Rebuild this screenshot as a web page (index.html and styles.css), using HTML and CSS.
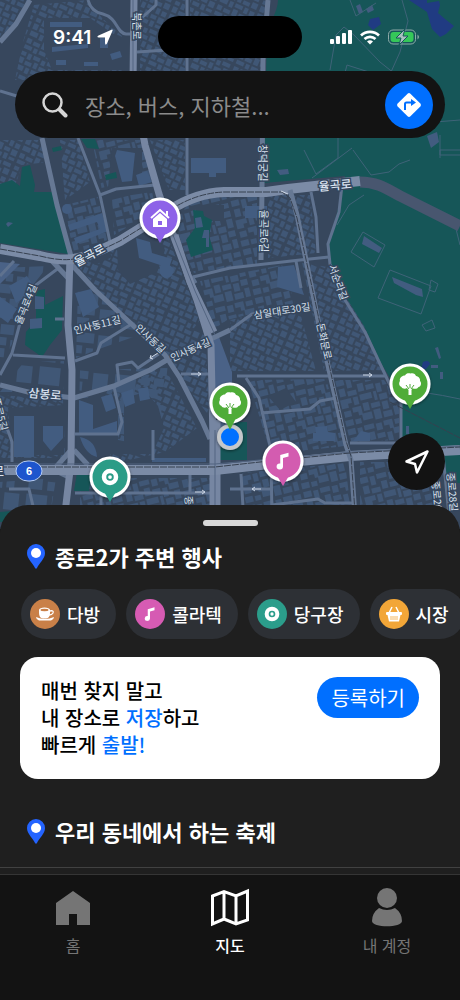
FILE: index.html
```html
<!DOCTYPE html>
<html lang="ko">
<head>
    <meta charset="UTF-8">
    <meta name="viewport" content="width=device-width, initial-scale=1.0">
    <title>지도</title>
    <link rel="stylesheet" href="styles.css">
</head>
<body>
    <!-- icons used in more than one place -->
    <svg class="defs" aria-hidden="true">
        <symbol id="note" viewBox="0 0 24 24">
            <path d="M9 5.500 18 3v4l-6 1.800V18a3.500 3.200 0 1 1-3-3.200z" fill="#fff"/>
        </symbol>
        <symbol id="ball" viewBox="0 0 24 24">
            <circle cx="12" cy="12" r="8" fill="none" stroke="#fff" stroke-width="6"/>
            <circle cx="12" cy="12" r="2.500" fill="#fff"/>
        </symbol>
        <symbol id="tree" viewBox="0 0 24 24">
            <path d="M7 3.500C8 1 11 1 12.500 1.500 15 .5 17.500 2 18 4c3 .5 4.500 3 4 5 2 2 1 5.500-1.500 6-1 2-4.500 2.500-6 1L13.500 18v5h-3v-5L9 16c-2 1.500-5 .5-5.500-1C1 14 .5 11 2 9 1 6 4 3.500 7 3.500z" fill="#fff"/>
            <path d="m8 13 3 4m1-5v4m4-3-3 4" fill="none" stroke="#4faa3a"/>
        </symbol>
        <symbol id="place" viewBox="0 0 18 25">
            <path d="M9 0a9 9 0 0 0-9 9c0 6 6 10 8 15q1 1.500 2 0c2-5 8-9 8-15a9 9 0 0 0-9-9z" fill="#2464ff"/>
            <circle cx="9" cy="9" r="5" fill="#fff"/>
        </symbol>
    </svg>

    <main class="app">
        <section class="map-area">
            <svg class="map" viewBox="0 0 460 529" preserveAspectRatio="xMidYMin slice" role="img" aria-label="종로 지도">
                <defs>
                    <pattern id="homes" width="58" height="50" patternUnits="userSpaceOnUse" patternTransform="rotate(-14)">
                        <path d="M1 1h8v6H1zM11 2h5v9h-5zM18 1h10v5H18zM30 2h6v7h-6zM38 1h9v9h-4V6h-5zM49 2h7v5h-7zM2 10h6v8H2zM10 14h9v5h-9zM21 9h6v8h-6zM29 12h8v5h-8zM39 13h5v9h-5zM46 10h10v6H46zM1 21h11v5H8v4H1zM14 21h5v8h-5zM21 20h12v6H21zM35 20h3v9h-3zM40 24h8v6h-8zM50 18h6v9h-6zM2 33h7v6H2zM11 31h9v9h-4v-4h-5zM22 29h6v8h-6zM30 31h9v5h-9zM41 32h6v8h-6zM49 30h7v6h-7zM1 42h8v6H1zM11 43h6v5h-6zM19 39h10v7H19zM31 38h7v10h-7zM40 42h9v6h-9zM51 39h5v9h-5z"/>
                    </pattern>
                    <pattern id="houses" width="40" height="36" patternUnits="userSpaceOnUse" patternTransform="rotate(24)">
                        <path d="M1 1h5v4H1zM8 1h4v6H8zM14 1h7v4h-7zM23 2h4v5h-4zM29 1h8v4h-8zM1 7h5v6H1zM8 9h7v4H8zM17 7h4v6h-4zM23 9h7v4h-7zM32 7h6v6h-6zM1 15h8v5H1zM11 15h4v6h-4zM17 15h8v4h-8zM27 15h4v6h-4zM33 16h5v5h-5zM1 23h5v5H1zM8 24h7v4H8zM17 21h5v7h-5zM24 23h6v4h-6zM32 23h6v6h-6zM1 30h8v4H1zM11 30h4v5h-4zM17 30h7v4h-7zM26 29h4v6h-4zM32 31h6v3h-6z"/>
                    </pattern>
                    <pattern id="offices" width="76" height="64" patternUnits="userSpaceOnUse" patternTransform="rotate(6)">
                        <path d="M2 2h16v12H2zM22 3h9v18h-9zM35 2h18v10H35zM57 3h14v20H57zM3 18h14v17H3zM22 26h19v9H22zM35 15h7v8h-7zM46 17h7v20h-7zM57 27h8v9h-8zM2 40h21v18H2zM28 40h9v8h-9zM28 51h18v9H28zM41 40h10v8H41zM56 41h15v17H56z"/>
                    </pattern>
                    <filter id="shadow" x="-30%" y="-30%" width="160%" height="160%">
                        <feDropShadow dx="0" dy="1" stdDeviation="1.500" flood-opacity=".5"/>
                    </filter>
                </defs>

                <rect class="land" width="460" height="530"/>

                <!-- building blocks -->
                <path fill="url(#houses)" d="M0 0h30L14 26 0 40zM34 5l54-5 14 18 20 18v44H15l8-38zM140 0h45v80h-45zM190 0h80l-8 70h-72z"/>
                <path fill="url(#houses)" d="M0 140h40l8 22-26 3-6 18-16 4zM60 140h18l12 42-25 18zM150 140h35v50h-16zM268 195h42l6 58-48 5zM230 320l68-15 18 66h-86zM302 262l30 6 60 102-68 1z"/>
                <path fill="url(#homes)" d="M92 140h48l14 42-52 8zM65 205l33-8 9 43-34 15zM112 198l40-6 4 18-42 25zM192 197h65v67l-63 9-21-46zM200 281l82-16 13 38-68 17-14 10zM248 380l78-1 20 67-75 8zM334 380h50l15 22v38l-50 2zM242 473l103-10 7 55H242zM360 462h80v60h-80zM80 478h130v42H80z"/>
                <path fill="url(#houses)" d="M78 266l40-24 42-25 14 36 26 67-15 20-40-4-43-42zM150 340l25-12 30 4 5 85zM105 390l60-22 32 60-32 24-54 12zM0 395l63 5 2 58H0z"/>
                <path fill="url(#offices)" d="M0 268l48-2-30 38-6 40-12 21zM78 288l22 8 42 38-43 15-23 9zM24 362l40-1v31H0zM80 370l90-2-16 80-76 3zM0 482l56-4-8 52H0z"/>

                <!-- yards and squares without houses -->
                <path class="land" d="M44 18h46l32 22v30H52l-8-20zM117 244l34-19 14 25-8 22-27 12-12-14zM83 252l22-9 7 14-17 8zM124 398l22-6 12 14 6 22-12 26h-28zM78 398h40v42l30 6v8H76zM8 408l56-3v50H12zM196 205h28v16h-28zM268 396l18-8 10 14-16 8zM112 148h30v40h-34z"/>

                <path class="building" d="m117 150 18 3-3 28-10 1-7-26zM136 175l11-4 5 11-13 4zM191 158h35v15h-10v4h-7v-4h-18zM68 225l34-12 6 18-32 13-2-6 26-9-3-7-27 9zM136 238l14 4 2 11 20 6-3 9-30-10zM160 266q8-4 14 3-1 10-9 9-7-3-5-12M278 267l16-2 10 30-27-8zM245 206h22v12h-22zM14 416h20v41H14zM43 426h20v12l-12 13-8-10zM79 400l14 5v24l24-8v12H79zM101 397l11-3 4 14-10 4zM121 393l12-4 2 14-10 4zM138 389l10-2 2 12-10 2zM80 437q16 3 17 20-12-3-17-20M315 427l12-1 1 6 7 1v8h-22v-8h3zM361 431l9 2v8h-17zM50 22h32v5H50zM52 47l36-3v4l-36 4zM100 38h8v10h-8zM110 54l10-3 2 6-10 3zM56 60h10v5H56zM84 62h14v4H84zM9 286l18-10 9 14-20 13zM0 297l17 12-9 14-8-6zM75 293l16-4 8 18-16 10zM152 458h54v4h-54z"/>
                <circle class="building" cx="67" cy="209" r="5"/>

                <!-- parks -->
                <path class="park" d="M278 0c0 12-10 24-11 38l-4 145 82-7-2 12-6 25-9 31 2 20 14 30 20 32 17 37 21 35v60h43v25h15V0z"/>
                <path class="park" d="m22 167 8-2 5 20-1 7h20l5 17 9 31v14L0 243v-59l12-4 8 6zM193 210l10 1 1 5 8 4-3 16 4 14-22 7-5-17 9-12zM36 291l9-2v16l18-9-1 34-12 15-8 12-17-12 1-13 10-12zM105 175l11-3 1 6-11 2zM52 148l9-2 1 4-9 2zM81 139h14l4 10-12-1zM220 422h27v38h-27zM77 473l14 2-2 16H74zM0 512l12-1-6 11H0z"/>
                <path class="building" d="m364 236 18 12-3 5-17-9zM392 277l30 12 1 8-7-2-22-12zM35 296l9 1v12h-9zM30 319l12-1v10l-12 1zM195 218l6-1 2 10-7 1zM204 230h5v17h-3v-9h-4zM356 6l4-2 3 8-4 2zM366 9l6-4 2 5-6 3zM277 170l11-1 1 5-9 1zM435 348l3-1 3 11-2 1zM431 365h7v3h-7zM440 372h3v7h-3zM406 426h3v8h-3zM427 136l10-4 2 10-8 6zM8 222l5 1-5 4-2-3z"/>
                <path class="water" d="m370 19 9-2 2 7-8 6-5-5zM409 0h18v3l12-2 1 4-2 8 7 6 9 7-8 8-6 3-8-8-5-17-9-6zM423 362q6-3 7 2l-4 5h-5z"/>
                <path class="trail" d="M350 0l6 16 20-13M330 70l6-35 8-8 10 8 26 27 20 16M402 0l6 21-8 31-9 20M343 80l4-15 25 8M351 252l12-20 22 13-11 22zM378 298l12-28 41 16-10 28zM352 148l-40 30M353 150l18 25 18-3 10-8 11-4M364 195l-15 10-12 20M440 158v-8h20M304 150l12 24 22-16v-20M435 122l25-2M440 135v20h20M431 280l7 4-3 8-6-2zM422 325l10-5 3 8-9 3zM455 225l5 20M394 390q30 1 66 9"/>
                <path class="plaza" d="M209 335l10 2 13 35v60l-13 4-4-40zM0 262l20 2-20 20z"/>

                <!-- small roads -->
                <g class="road small">
                    <path d="M88 0q3 12 15 14c15 4 13 19 23 20h9M137 52l30-2M156 0v5l-20 18M0 91l20 6M0 276l14-15M187 0v195M78 138l22 57 10 47M100 195l16-6 39-4"/>
                    <path d="M311 192l5 25 2 36M296 261l5 27M342 185l-3 27-11 32 2 20 15 36 20 32 25 53 11 18v50"/>
                    <path d="M193 277l37-9 70-8 29-3M230 330l22-16 59-8M237 376h148M246 378l13 20 12 52 1 75M261 413l49-4 10-8 16-3M350 443h50"/>
                    <path d="M60 267l-24 18-16 38-8 30-12 22M13 355l52 3M75 361l22-8 4-10 29-18M114 387l8 35-4 12H75M119 383l-2-18 15-3 6 6 25-17M153 430v30M75 493h137M101 493v32M190 473v20M230 489h41M241 474l3 50M272 505l46-6 7 4h30M9 489h20l8 34M0 408l12 34v20M55 319h9M192 276l4 7M181 374h32M443 455l7 70"/>
                </g>
                <g class="road medium">
                    <path d="M30 0 16 24 0 42M42 138l15 67 15 55M72 265l23 25 30 28 40 37 15 23 22 43 8 18M0 385l32 8 42 5 40-12 36-16 35-21 28-11 17-8M268 0l-5 60-1 130-1 70"/>
                    <path d="M52 261l16 17M71 450l-15 17M74 450l14 15M71 478l-17-8"/>
                </g>

                <!-- main roads -->
                <path class="tunnel" d="M360 182c16 0 24 5 40 14l60 30"/>
                <g class="road large">
                    <path d="M134 0l-1 82 12 63 14 49 16 46 22 60 14 45 2 95v90"/>
                    <path d="M70 255l-2 70 4 45-1 92-8 68"/>
                    <path d="M175 235l15 47 24 50"/>
                    <path d="M217 420v110"/>
                </g>
                <path class="road huge" d="M0 249l40 7c32 8 43 3 80-15l50-31q26-17 54-18h42l22-3 72-8"/>
                <path class="road huge" d="M0 470h215l45-5 90-9 110-6"/>
                <path class="road medium" d="M290 190l7 25 23 115 26 115 5 15 5 70"/>
                <path class="divider" d="M173 235l22 56 20 44M215 430v92M133 0v78M0 464h215l45-4 90-8 110-6"/>
                <path class="rail" d="M0 249l40 7c32 8 43 3 80-15l50-31q26-17 54-18h58l8 6 7 20 25 115 24 108 5 15 5 70M0 467h215l45-5 90-9 110-6M390 402l70 36"/>
                <path class="arrow" d="m288 194-7-3M191 374h10m-3-2 3 2-3 2M363 375h9m-3-2 3 2-3 2M158 353l-8 5m1-3-1 3 3 1M261 489h-9m3-2-3 2 3 2M195 492h10m-3-2 3 2-3 2"/>

                <g class="street">
                    <text transform="translate(137 26) rotate(90)">북촌로</text>
                    <text class="wide" transform="translate(89 254) rotate(-28)">율곡로</text>
                    <text class="wide" transform="translate(335 184) rotate(-5)">율곡로</text>
                    <text transform="translate(263 163) rotate(90)">창덕궁길</text>
                    <text transform="translate(264 231) rotate(90)">율곡로6길</text>
                    <text transform="translate(339 282) rotate(70)">서순라길</text>
                    <text transform="translate(282 310) rotate(-9)">삼일대로30길</text>
                    <text transform="translate(325 341) rotate(77)">돈화문로</text>
                    <text transform="translate(97 324) rotate(-14)">인사동11길</text>
                    <text transform="translate(151 338) rotate(43)">인사동길</text>
                    <text transform="translate(190 349) rotate(-24)">인사동4길</text>
                    <text class="wide" transform="translate(45 393) rotate(5)">삼봉로</text>
                    <text transform="translate(25 304) rotate(-68)">율곡로4길</text>
                    <text transform="translate(1 414) rotate(76)">종로5길</text>
                    <text class="wide" transform="translate(-7 470)">종로</text>
                    <text transform="translate(190 505) rotate(85)">종로</text>
                    <text transform="translate(438 500) rotate(85)">종로26길</text>
                    <text transform="translate(453 492) rotate(85)">종로28길</text>
                </g>
                <rect class="route" x="16" y="461" width="26" height="20" rx="12"/>
                <text class="route-no" x="29" y="475">6</text>

                <!-- current position -->
                <circle cx="230" cy="437" r="11" fill="#006fff" stroke="#c5c8cb" stroke-width="4" filter="url(#shadow)"/>

                <!-- pins, drawn round their centre -->
                <g transform="translate(160 218)" fill="#8d62e8">
                    <circle class="pin" r="19" filter="url(#shadow)"/>
                    <path d="M-7 13H7L0 25z"/>
                    <path d="M-9 0 0-8 9 0M7-7v5" fill="none" stroke="#fff" stroke-width="2"/>
                    <path d="M-7 1 0-5l7 6v8H-7z" fill="#fff"/>
                    <path d="M-2 3h4v4h-4z"/>
                </g>
                <g transform="translate(230 403)" fill="#50ac39">
                    <circle class="pin" r="19" filter="url(#shadow)"/>
                    <path d="M-7 13H7L0 27z"/>
                    <use href="#tree" x="-12" y="-12" width="24" height="24"/>
                </g>
                <g transform="translate(410 384)" fill="#50ac39">
                    <circle class="pin" r="19" filter="url(#shadow)"/>
                    <path d="M-7 13H7L0 25z"/>
                    <use href="#tree" x="-12" y="-12" width="24" height="24"/>
                </g>
                <g transform="translate(110 477)" fill="#2a9c87">
                    <circle class="pin" r="19" filter="url(#shadow)"/>
                    <path d="M-7 13H7L0 25z"/>
                    <use href="#ball" x="-9" y="-9" width="18" height="18"/>
                </g>
                <g transform="translate(283 461)" fill="#d35bb0">
                    <circle class="pin" r="19" filter="url(#shadow)"/>
                    <path d="M-7 13H7L0 25z"/>
                    <use href="#note" x="-11" y="-11" width="22" height="22"/>
                </g>
            </svg>

            <header class="status-bar">
                <div class="clock">
                    <span>9:41</span>
                    <svg width="16" height="16" viewBox="0 0 16 16"><path d="M14.500.7q1.600-.5 1 1L10 14.500q-1.500 2.500-2-.5V8.500H2Q-1 8 1.500 6.500z" fill="#fff"/></svg>
                </div>
                <div class="island"></div>
                <div class="signals">
                    <svg width="22" height="14" viewBox="0 0 22 14" fill="#fff">
                        <rect y="9" width="4" height="5" rx="1"/><rect x="6" y="6" width="4" height="8" rx="1"/><rect x="12" y="3" width="4" height="11" rx="1"/><rect x="18" width="4" height="14" rx="1"/>
                    </svg>
                    <svg width="20" height="15" viewBox="0 0 20 15" fill="none" stroke="#fff" stroke-width="2.700">
                        <path d="M1 5.500a13 13 0 0 1 18 0M4.500 9a8 8 0 0 1 11 0"/><path d="M7 11.500q3-2.500 6 0l-3 3z" fill="#fff" stroke="none"/>
                    </svg>
                    <svg width="32" height="16" viewBox="0 0 32 16">
                        <rect x=".5" y="1" width="27" height="14" rx="4.500" fill="none" stroke="#8eaaa9"/>
                        <rect x="2.500" y="3" width="23" height="10" rx="3" fill="#35c759"/>
                        <path d="M29.500 5.500q3 2.500 0 5z" fill="#8eaaa9"/>
                        <path d="M17 0 8 9h5l-2 7 9-9h-5z" fill="#a9bfc0" stroke="#16575a"/>
                    </svg>
                </div>
            </header>

            <form class="search">
                <label for="query" aria-label="검색">
                    <svg width="26" height="26" viewBox="0 0 26 26" fill="none" stroke="#d6d6d6" stroke-linecap="round"><circle cx="10.500" cy="10.500" r="9" stroke-width="2.500"/><path d="m17.500 17.500 6 6" stroke-width="4"/></svg>
                </label>
                <input type="text" id="query" placeholder="장소, 버스, 지하철...">
                <button type="button" class="directions" aria-label="길찾기">
                    <svg width="28" height="28" viewBox="0 0 28 28"><rect x="5" y="5" width="18" height="18" rx="2" transform="rotate(45 14 14)" fill="#fff"/><path d="M10 19v-6q0-1.500 1.500-1.500H17" fill="none" stroke="#006fff" stroke-width="2"/><path d="m16 8 5 3.500-5 3.500z" fill="#006fff"/></svg>
                </button>
            </form>

            <button type="button" class="locate" aria-label="현재 위치">
                <svg width="26" height="26" viewBox="0 0 26 26"><path d="M23.500 2.500 13 23.500l-2-8.500-8.500-2.500z" fill="none" stroke="#fff" stroke-width="2.500" stroke-linejoin="round"/></svg>
            </button>
        </section>

        <section class="sheet">
            <div class="handle"></div>
            <h2><svg width="18" height="25"><use href="#place"/></svg>종로2가 주변 행사</h2>

            <div class="chips">
                <button type="button" class="chip">
                    <span class="chip-icon cafe"><svg width="20" height="20" viewBox="0 0 20 20"><path d="M1 13q9 4 18 0 0 2-3 3.500H4Q1 15 1 13z" fill="#fff"/><path d="M4 6h11v3q0 5-4 5.500H8Q4 14 4 9z" fill="#fff"/><ellipse cx="9.500" cy="6" rx="5.500" ry="2.500" fill="#fff"/><ellipse cx="9.500" cy="6" rx="4" ry="1.200" fill="#c98048"/><path d="M15 7q4-1 3 2-1 2-4 2" fill="none" stroke="#fff" stroke-width="1.300"/></svg></span>
                    다방
                </button>
                <button type="button" class="chip">
                    <span class="chip-icon disco"><svg width="18" height="18"><use href="#note"/></svg></span>
                    콜라텍
                </button>
                <button type="button" class="chip">
                    <span class="chip-icon pool"><svg width="16" height="16"><use href="#ball"/></svg></span>
                    당구장
                </button>
                <button type="button" class="chip">
                    <span class="chip-icon market"><svg width="18" height="18" viewBox="0 0 18 18"><path d="m7 2-3 6m7-6 3 6" stroke="#fff" stroke-width="1.500"/><rect x="1" y="7" width="16" height="3" rx="1" fill="#fff"/><path d="M2.500 10h13L14 16.500H4z" fill="#fff"/><path d="M6 11v4m2-4v4m2-4v4m2-4v4" stroke="#f2a638" stroke-width=".8"/></svg></span>
                    시장
                </button>
            </div>

            <div class="card">
                <p>매번 찾지 말고<br>내 장소로 <em>저장</em>하고<br>빠르게 <em>출발!</em></p>
                <button type="button" class="register">등록하기</button>
            </div>

            <h2><svg width="18" height="25"><use href="#place"/></svg>우리 동네에서 하는 축제</h2>
            <hr>
        </section>

        <nav class="tabs">
            <a href="#">
                <svg width="36" height="40" viewBox="0 0 36 40"><path d="M18 4 35 16v22H22V27h-8v11H1V16z" fill="currentColor"/></svg>
                홈
            </a>
            <a href="#" class="active">
                <svg width="40" height="40" viewBox="0 0 40 40"><path d="M2.500 9 14 4.500 26 9l11.500-5v29L26 37l-12-5-11.500 5zM14 4.500V32M26 9v28" fill="none" stroke="currentColor" stroke-width="3"/></svg>
                지도
            </a>
            <a href="#">
                <svg width="36" height="40" viewBox="0 0 36 40"><circle cx="18" cy="11" r="10" fill="currentColor"/><path d="M10 21q8 4 16 0 7 5 7 13c0 7-30 7-30 0q0-8 7-13z" fill="currentColor"/></svg>
                내 계정
            </a>
        </nav>
    </main>
</body>
</html>
```

FILE: styles.css
```css
* {
    box-sizing: border-box;
}
body {
    margin: 0;
    background-color: #131313;
    color: #fff;
    font-family: "Noto Sans CJK KR", sans-serif;
}
button, input {
    border: none;
    color: inherit;
    font-family: inherit;
}
button {
    padding: 0;
    cursor: pointer;
}
svg {
    display: block;
    flex-shrink: 0;
}
.defs {
    position: absolute;
    width: 0;
    height: 0;
}
.app {
    display: flex;
    flex-direction: column;
    min-height: 100vh;
}

/* map */
.map-area {
    position: relative;
    display: flex;
    flex: 1;
    flex-direction: column;
    min-height: 400px;
    margin-bottom: -24px;
    padding: 16px 15px 39px;
}
.map {
    position: absolute;
    top: 0;
    left: 0;
    width: 100%;
    height: 100%;
}
.land {
    fill: #37475d;
}
pattern path {
    fill: #405776;
}
.building {
    fill: #425c80;
}
.park {
    fill: #165658;
}
.water {
    fill: #203b82;
}
.plaza {
    fill: #4a6287;
}
.trail {
    fill: none;
    stroke: #3f6378;
}
.road {
    fill: none;
    stroke: #7686a2;
    stroke-linejoin: round;
}
.small {
    stroke: #5f728f;
    stroke-width: 3;
}
.medium {
    stroke: #667894;
    stroke-width: 5;
}
.large {
    stroke-width: 7;
}
.huge {
    stroke: #7b8ba6;
    stroke-width: 10;
}
.tunnel {
    fill: none;
    stroke: #48566f;
    stroke-width: 11;
}
.divider {
    fill: none;
    stroke: #536581;
}
.rail {
    fill: none;
    stroke: #36404f;
    stroke-dasharray: 7 1;
}
.arrow {
    fill: none;
    stroke: #cbd5e4;
}
.street text {
    fill: #dae2ef;
    stroke: #35465e;
    stroke-width: 3px;
    paint-order: stroke;
    font-size: 10px;
    text-anchor: middle;
    dominant-baseline: central;
}
.street .wide {
    font-size: 12px;
    font-weight: 500;
}
.route {
    fill: #1e55cd;
    stroke: #b6cdf5;
}
.route-no {
    fill: #fff;
    font: bold 11px "Liberation Sans", sans-serif;
    text-anchor: middle;
}
.pin {
    stroke: #fff;
    stroke-width: 3;
}

/* status bar */
.status-bar {
    position: relative;
    display: grid;
    grid-template-columns: 1fr 144px 1fr;
    align-items: center;
}
.clock, .signals {
    display: flex;
    align-items: center;
}
.clock {
    gap: 6px;
    padding-left: 38px;
    font: 600 19px Inter, sans-serif;
}
.island {
    height: 42px;
    border-radius: 21px;
    background-color: #000;
}
.signals {
    justify-content: flex-end;
    gap: 8px;
    padding-right: 25px;
}

/* search */
.search {
    position: relative;
    display: flex;
    align-items: center;
    gap: 17px;
    height: 67px;
    margin-top: 13px;
    padding: 0 12px 0 27px;
    border-radius: 34px;
    background-color: #131313;
}
.search input {
    flex: 1;
    min-width: 0;
    padding: 0;
    background: none;
    font-size: 22px;
    outline: none;
}
.search input::placeholder {
    color: #8b8b8b;
}
.directions, .locate {
    display: grid;
    place-items: center;
    border-radius: 50%;
}
.directions {
    width: 48px;
    height: 48px;
    background-color: #006fff;
}
.locate {
    position: relative;
    width: 57px;
    height: 57px;
    margin-top: auto;
    align-self: flex-end;
    background-color: #131313;
}

/* sheet */
.sheet {
    position: relative;
    padding-top: 15px;
    border-radius: 28px 28px 0 0;
    background-color: #1f1f1f;
}
.handle {
    width: 55px;
    height: 6px;
    margin: 0 auto 14px;
    border-radius: 3px;
    background-color: #d8d8d8;
}
h2 {
    display: flex;
    align-items: center;
    gap: 10px;
    margin: 0;
    padding-left: 27px;
    font-size: 22px;
    font-weight: 600;
    line-height: 32px;
}
.chips {
    display: flex;
    gap: 10px;
    margin: 17px 0 18px;
    padding-left: 21px;
    overflow: hidden;
}
.chip {
    display: flex;
    flex-shrink: 0;
    align-items: center;
    gap: 7px;
    height: 50px;
    padding: 0 16px 0 9px;
    border-radius: 25px;
    background-color: #2d3035;
    font-size: 18px;
    font-weight: 500;
}
.chip-icon {
    display: grid;
    place-items: center;
    width: 30px;
    height: 30px;
    border-radius: 50%;
}
.cafe {
    background-color: #c98048;
}
.disco {
    background-color: #d65bb3;
}
.pool {
    background-color: #2b9d8b;
}
.market {
    background-color: #f2a638;
}
.card {
    display: flex;
    align-items: flex-start;
    justify-content: space-between;
    margin: 0 20px 36px;
    padding: 20px 21px 21px;
    border-radius: 18px;
    background-color: #fff;
    color: #000;
}
.card p {
    margin: 0;
    font-size: 20px;
    font-weight: 500;
    line-height: 27px;
}
.card em {
    color: #006fff;
    font-style: normal;
}
.register {
    height: 41px;
    padding: 0 14px;
    border-radius: 21px;
    background-color: #006fff;
    color: #fff;
    font-size: 20px;
}
hr {
    height: 1px;
    margin: 20px 0 6px;
    border: none;
    background-color: #414141;
}

/* bottom tabs */
.tabs {
    position: relative;
    display: flex;
    justify-content: space-between;
    padding: 12px 28px 43px;
    border-top: 1px solid #353535;
    background-color: #131313;
}
.tabs a {
    display: flex;
    flex-direction: column;
    align-items: center;
    gap: 6px;
    width: 90px;
    color: #757575;
    font-size: 16px;
    line-height: 24px;
    text-decoration: none;
}
.tabs .active {
    color: #fff;
    font-weight: 500;
}
```
